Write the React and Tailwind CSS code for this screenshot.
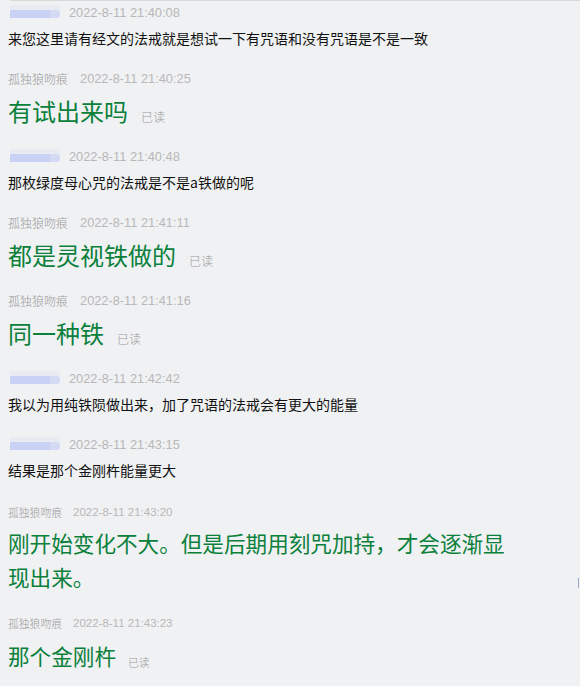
import React from "react";

const CJK = { fontFamily: '"Noto Sans CJK SC", "Noto Sans", sans-serif' };
const TS = { fontFamily: '"Liberation Sans", Arial, sans-serif' };

// chat log rows, top to bottom
const rows = [
  { blur: true, time: "2022-8-11 21:40:08", text: "来您这里请有经文的法戒就是想试一下有咒语和没有咒语是不是一致" },
  { name: "孤独狼吻痕", time: "2022-8-11 21:40:25", text: "有试出来吗", big: true },
  { blur: true, time: "2022-8-11 21:40:48", text: "那枚绿度母心咒的法戒是不是a铁做的呢" },
  { name: "孤独狼吻痕", time: "2022-8-11 21:41:11", text: "都是灵视铁做的", big: true },
  { name: "孤独狼吻痕", time: "2022-8-11 21:41:16", text: "同一种铁", big: true },
  { blur: true, time: "2022-8-11 21:42:42", text: "我以为用纯铁陨做出来，加了咒语的法戒会有更大的能量" },
  { blur: true, time: "2022-8-11 21:43:15", text: "结果是那个金刚杵能量更大" },
];

// blurred-out nickname
function Blob() {
  return (
    <div className="flex flex-col w-[50px] ml-[2px] mt-[-3px]">
      <div className="h-[5px] bg-[#e9ebf2]" />
      <div className="flex h-[8px]">
        <div className="w-[40px] bg-[#c9d1f5]" />
        <div className="w-[10px] bg-[#d4daf4] rounded-r-[3px]" />
      </div>
    </div>
  );
}

function Header({ row }) {
  return (
    <div className={"flex items-center h-4 " + (row.blur ? "gap-[9px]" : "gap-3")}>
      {row.blur ? (
        <Blob />
      ) : (
        <span className="text-[12px] leading-4 font-light text-[#9a9a9a]" style={CJK}>
          {row.name}
        </span>
      )}
      <span className="text-[12.8px] leading-4 text-[#b8b8b8]" style={TS}>
        {row.time}
      </span>
    </div>
  );
}

function Row({ row }) {
  if (row.big)
    return (
      <div className="pb-[21px]">
        <Header row={row} />
        <div className="flex items-end mt-[7px]">
          <p className="text-[24px] leading-[34px] text-[#0a803b]" style={CJK}>
            {row.text}
          </p>
          <span className="text-[12px] leading-4 mb-[3px] ml-[13px] font-light text-[#999999]" style={CJK}>
            已读
          </span>
        </div>
      </div>
    );
  return (
    <div className="pb-[23px]">
      <Header row={row} />
      <p className="mt-[7px] text-[14px] leading-5 text-[#111111]" style={CJK}>
        {row.text}
      </p>
    </div>
  );
}

export default function App() {
  return (
    <div className="relative w-[580px] h-[686px] overflow-hidden bg-[#f0f1f3]">
      <div className="ml-[10px] h-px bg-[#d8d9db]" />
      <div className="pt-[3.5px] pl-2">
        {rows.map((row, i) => (
          <Row key={i} row={row} />
        ))}

        {/* last two messages are slightly smaller in the capture */}
        <div className="pt-px pb-[21.5px]">
          <div className="flex items-center h-4 gap-[11px]">
            <span className="text-[10.8px] leading-4 font-light text-[#9a9a9a]" style={CJK}>
              孤独狼吻痕
            </span>
            <span className="text-[11.5px] leading-4 text-[#b8b8b8]" style={TS}>
              2022-8-11 21:43:20
            </span>
          </div>
          <p className="mt-[6px] w-[510px] text-[21.6px] leading-[34px] text-[#0a803b]" style={CJK}>
            刚开始变化不大。但是后期用刻咒加持，才会逐渐显现出来。
          </p>
        </div>
        <div>
          <div className="flex items-center h-4 gap-[11px]">
            <span className="text-[10.8px] leading-4 font-light text-[#9a9a9a]" style={CJK}>
              孤独狼吻痕
            </span>
            <span className="text-[11.5px] leading-4 text-[#b8b8b8]" style={TS}>
              2022-8-11 21:43:23
            </span>
          </div>
          <div className="flex items-end mt-[8px]">
            <p className="text-[21.6px] leading-[34px] text-[#0a803b]" style={CJK}>
              那个金刚杵
            </p>
            <span className="text-[10.8px] leading-[14px] mb-[4px] ml-3 font-light text-[#999999]" style={CJK}>
              已读
            </span>
          </div>
        </div>
      </div>
      {/* sliver of a cut-off glyph at the right edge */}
      <span className="absolute right-px top-[578px] w-px h-[10px] bg-[#9aa6c2]" />
    </div>
  );
}
